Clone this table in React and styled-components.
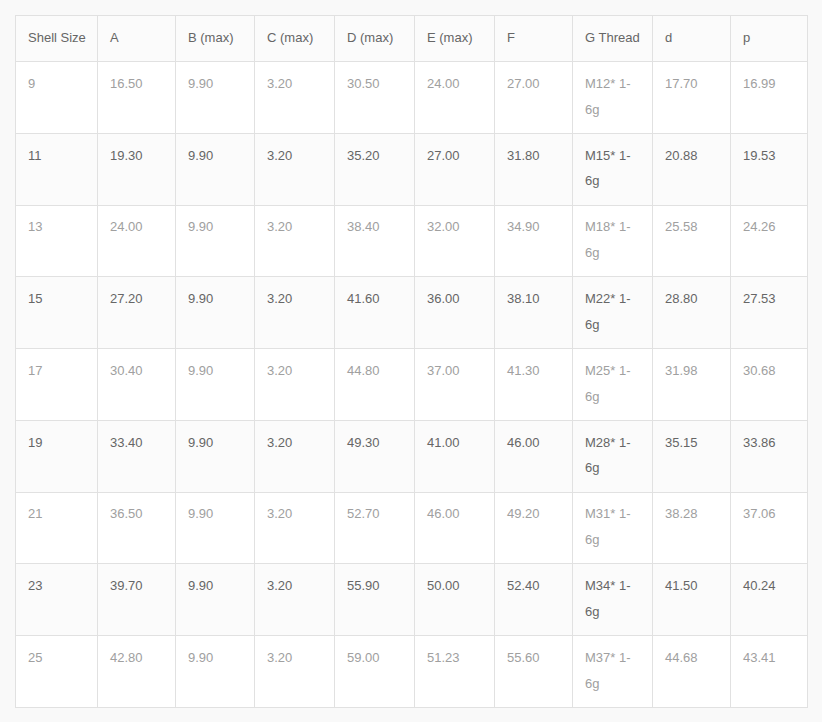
import React from 'react'
import styled, { createGlobalStyle } from 'styled-components'

const GlobalStyle = createGlobalStyle`
  body {
    margin: 0;
    background: #f9f9f9;
    font-family: "Liberation Sans", Arial, sans-serif;
  }
`

const Wrapper = styled.div`
  padding: 15px 14px 15px 15px;
`

const Table = styled.table`
  width: 100%;
  border-collapse: collapse;
  table-layout: fixed;
  font-size: 13px;
  line-height: 25.8px;
  background: #fff;
`

const HeadCell = styled.th`
  text-align: left;
  font-weight: normal;
  color: #666;
  background: #fbfbfb;
  border: 1px solid #e1e1e1;
  padding: 8.8px 12px 10.4px;
  vertical-align: top;
  white-space: nowrap;
`

const Row = styled.tr`
  background: ${p => (p.$shade ? '#fbfbfb' : '#fff')};
  color: ${p => (p.$shade ? '#666' : '#a0a0a0')};
`

const Cell = styled.td`
  border: 1px solid #e1e1e1;
  padding: 8.8px 12px 10.4px;
  vertical-align: top;
`

const widths = [82, 78, 79, 80, 80, 80, 78, 80, 78, 77]

const headers = ['Shell Size', 'A', 'B (max)', 'C (max)', 'D (max)', 'E (max)', 'F', 'G Thread', 'd', 'p']

const rows = [
  ['9', '16.50', '9.90', '3.20', '30.50', '24.00', '27.00', 'M12* 1-6g', '17.70', '16.99'],
  ['11', '19.30', '9.90', '3.20', '35.20', '27.00', '31.80', 'M15* 1-6g', '20.88', '19.53'],
  ['13', '24.00', '9.90', '3.20', '38.40', '32.00', '34.90', 'M18* 1-6g', '25.58', '24.26'],
  ['15', '27.20', '9.90', '3.20', '41.60', '36.00', '38.10', 'M22* 1-6g', '28.80', '27.53'],
  ['17', '30.40', '9.90', '3.20', '44.80', '37.00', '41.30', 'M25* 1-6g', '31.98', '30.68'],
  ['19', '33.40', '9.90', '3.20', '49.30', '41.00', '46.00', 'M28* 1-6g', '35.15', '33.86'],
  ['21', '36.50', '9.90', '3.20', '52.70', '46.00', '49.20', 'M31* 1-6g', '38.28', '37.06'],
  ['23', '39.70', '9.90', '3.20', '55.90', '50.00', '52.40', 'M34* 1-6g', '41.50', '40.24'],
  ['25', '42.80', '9.90', '3.20', '59.00', '51.23', '55.60', 'M37* 1-6g', '44.68', '43.41'],
]

const App = () => {
  return (
    <Wrapper>
      <GlobalStyle />
      <Table>
        <colgroup>
          {widths.map((w, i) => <col key={i} style={{ width: w }} />)}
        </colgroup>
        <thead>
          <tr>
            {headers.map(h => <HeadCell key={h}>{h}</HeadCell>)}
          </tr>
        </thead>
        <tbody>
          {rows.map((row, i) => (
            <Row key={row[0]} $shade={i % 2 === 1}>
              {row.map((val, j) => <Cell key={j}>{val}</Cell>)}
            </Row>
          ))}
        </tbody>
      </Table>
    </Wrapper>
  )
}

export default App
